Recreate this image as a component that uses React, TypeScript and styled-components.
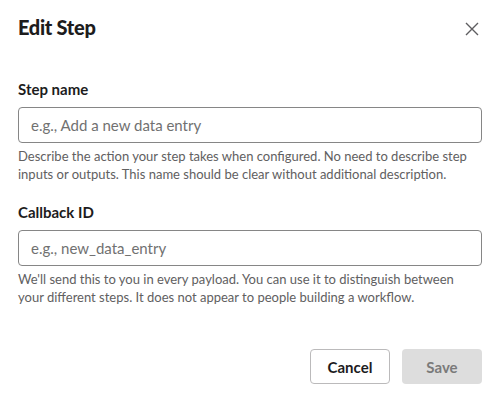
import styled, { createGlobalStyle } from "styled-components";

const GlobalStyle = createGlobalStyle`
  body {
    margin: 0;
    background: #ffffff;
    font-family: Lato, "Noto Sans", sans-serif;
    color: #1d1c1d;
  }
`;

const Modal = styled.div`
  width: 500px;
  height: 396px;
  box-sizing: border-box;
  padding: 12px 18px 0;
  display: flex;
  flex-direction: column;
`;

const Header = styled.div`
  display: flex;
  align-items: center;
  justify-content: space-between;
  height: 30px;
`;

const Title = styled.h1`
  margin: 0;
  font-size: 20px;
  font-weight: 900;
  letter-spacing: -0.3px;
`;

const CloseButton = styled.button`
  width: 24px;
  height: 24px;
  margin-right: -2px;
  margin-top: 4px;
  padding: 0;
  border: none;
  background: none;
  color: #5e5d60;
  display: flex;
  align-items: center;
  justify-content: center;
  cursor: pointer;
`;

const Field = styled.div<{ $top: number }>`
  margin-top: ${(p) => p.$top}px;
  display: flex;
  flex-direction: column;
`;

const Label = styled.label`
  font-size: 15px;
  font-weight: 700;
  line-height: 22px;
`;

const Input = styled.input`
  margin-top: 7px;
  height: 36px;
  box-sizing: border-box;
  border: 1px solid #868686;
  border-radius: 4px;
  padding: 0 12px;
  font-family: inherit;
  font-size: 15px;
  color: #1d1c1d;
  &::placeholder {
    color: #717171;
  }
`;

const Help = styled.p`
  margin: 4px 0 0;
  font-size: 13px;
  line-height: 18px;
  color: #616061;
`;

const Footer = styled.div`
  margin-top: auto;
  margin-bottom: 12px;
  display: flex;
  justify-content: flex-end;
  gap: 12px;
`;

const Button = styled.button<{ $primary?: boolean }>`
  width: 80px;
  height: 35px;
  border-radius: 4px;
  font-family: inherit;
  font-size: 15px;
  font-weight: 700;
  border: ${(p) => (p.$primary ? "none" : "1px solid #bbbabb")};
  background: ${(p) => (p.$primary ? "#dddddd" : "#ffffff")};
  color: ${(p) => (p.$primary ? "#7a7a7a" : "#1d1c1d")};
`;

export default function App() {
  return (
    <>
      <GlobalStyle />
      <Modal>
        <Header>
          <Title>Edit Step</Title>
          <CloseButton aria-label="Close">
            <svg width="14" height="14" viewBox="0 0 14 14">
              <path d="M1 1L13 13M13 1L1 13" stroke="currentColor" strokeWidth="1.4" />
            </svg>
          </CloseButton>
        </Header>
        <Field $top={36}>
          <Label>Step name</Label>
          <Input placeholder="e.g., Add a new data entry" />
          <Help>
            Describe the action your step takes when configured. No need to describe step
            inputs or outputs. This name should be clear without additional description.
          </Help>
        </Field>
        <Field $top={18}>
          <Label>Callback ID</Label>
          <Input placeholder="e.g., new_data_entry" />
          <Help>
            We'll send this to you in every payload. You can use it to distinguish between
            your different steps. It does not appear to people building a workflow.
          </Help>
        </Field>
        <Footer>
          <Button>Cancel</Button>
          <Button $primary>Save</Button>
        </Footer>
      </Modal>
    </>
  );
}
